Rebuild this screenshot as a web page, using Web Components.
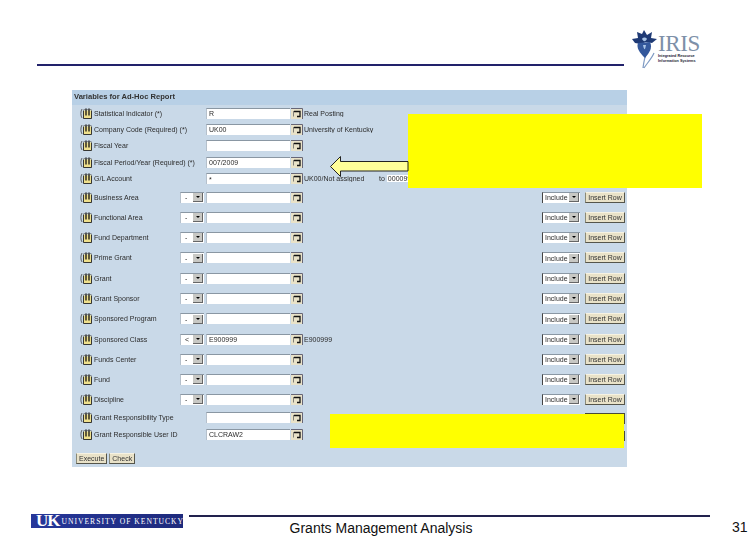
<!DOCTYPE html>
<html>
<head>
<meta charset="utf-8">
<title>Grants Management Analysis</title>
<style>
  html, body { margin: 0; background: #fff; }
  body { width: 756px; height: 540px; overflow: hidden; font-family: "Liberation Sans", Arial, sans-serif; }
</style>
</head>
<body>
<slide-page>
  <slide-header></slide-header>
  <report-panel title="Variables for Ad-Hoc Report">
    <report-row h="16" label="Statistical Indicator (*)" value="R" desc="Real Posting"></report-row>
    <report-row h="16" label="Company Code (Required) (*)" value="UK00" desc="University of Kentucky"></report-row>
    <report-row h="17" label="Fiscal Year"></report-row>
    <report-row h="16" label="Fiscal Period/Year (Required) (*)" value="007/2009"></report-row>
    <report-row h="17" label="G/L Account" value="*" desc="UK00/Not assigned" to="00009999"></report-row>
    <report-row h="20" label="Business Area" op="-" more></report-row>
    <report-row h="20" label="Functional Area" op="-" more></report-row>
    <report-row h="20" label="Fund Department" op="-" more></report-row>
    <report-row h="21" label="Prime Grant" op="-" more></report-row>
    <report-row h="20" label="Grant" op="-" more></report-row>
    <report-row h="20" label="Grant Sponsor" op="-" more></report-row>
    <report-row h="21" label="Sponsored Program" op="-" more></report-row>
    <report-row h="20" label="Sponsored Class" op="<" value="E900999" desc="E900999" more></report-row>
    <report-row h="20" label="Funds Center" op="-" more></report-row>
    <report-row h="20" label="Fund" op="-" more></report-row>
    <report-row h="20" label="Discipline" op="-" more></report-row>
    <report-row h="17" label="Grant Responsibility Type"></report-row>
    <report-row h="16" label="Grant Responsible User ID" value="CLCRAW2"></report-row>
    <sap-button slot="actions">Execute</sap-button>
    <sap-button slot="actions">Check</sap-button>
  </report-panel>
  <slide-footer page="31">Grants Management Analysis</slide-footer>
</slide-page>

<script>
class SlidePage extends HTMLElement {
  constructor () {
    super()
    this.shadow = this.attachShadow({ mode: 'open' })
  }

  connectedCallback () {
    this.shadow.innerHTML = /* html */`
      <style>
        :host { display: flex; flex-direction: column; position: relative; width: 756px; height: 540px; }
        /* the highlight boxes and the arrow are laid over the report */
        .cover { position: absolute; background: #ffff00; }
        .top { left: 408px; top: 114px; width: 294px; height: 74px; }
        .bottom { left: 330px; top: 414px; width: 294px; height: 34px; }
        .sliver {
          position: absolute; left: 585px; top: 413px; width: 40px; height: 28px;
          border-top: 1px solid #4a4a3a; box-sizing: border-box;
          background: linear-gradient(#4a4a3a 0 10px, transparent 10px 17px, #4a4a3a 17px) right / 1px 100% no-repeat;
        }
        svg { position: absolute; left: 328px; top: 154px; }
      </style>
      <slot></slot>
      <div class="sliver"></div>
      <div class="cover top"></div>
      <div class="cover bottom"></div>
      <svg width="82" height="25" viewBox="0 0 82 25">
        <path d="M2.5 12.5 L12.5 2.5 V7.5 H80 V17 H12.5 V22.5 Z" fill="#ffff99" stroke="#222" stroke-width="1"/>
      </svg>
    `
  }
}

class SlideHeader extends HTMLElement {
  constructor () {
    super()
    this.shadow = this.attachShadow({ mode: 'open' })
  }

  connectedCallback () {
    this.shadow.innerHTML = /* html */`
      <style>
        :host { display: flex; height: 90px; padding-left: 37px; box-sizing: border-box; }
        .rule { width: 587px; height: 2px; margin-top: 64px; background: #22226b; }
        .logo { display: flex; margin: 30px 0 0 8px; width: 70px; }
        svg { flex: none; }
        .words { display: flex; flex-direction: column; color: #000; }
        .name { font: 23px/20px "Liberation Serif", serif; letter-spacing: -.4px; color: #7d90a8; margin-top: 4px; }
        .sub { font: bold 3.8px/5px "Liberation Sans", sans-serif; white-space: nowrap; color: #223; }
      </style>
      <div class="rule"></div>
      <div class="logo">
        <svg width="26" height="40" viewBox="0 0 26 40">
          <path d="M11 38 C12 30 13 26 15 21 M12 38 C16 32 20 28 22 23" fill="none" stroke="#7f9bc4" stroke-width="1.2"/>
          <path d="M12 0 L15 5 L20 2 L19 8 L25 9 L20 13 L14 12 L9 14 L3 13 L0 9 L6 8 L5 2 L10 4 Z" fill="#1f3a75"/>
          <path d="M6 13 C4 18 8 23 13 28 C17 23 21 18 18 12 Z" fill="#34589c"/>
          <path d="M10 9 C12 12 13 12 15 9 C14 7 11 7 10 9 Z M11 15 C12 20 13 21 14 15 Z" fill="#a9c4e6"/>
        </svg>
        <div class="words">
          <span class="name">IRIS</span>
          <span class="sub">Integrated Resource<br>Information Systems</span>
        </div>
      </div>
    `
  }
}

class ReportPanel extends HTMLElement {
  constructor () {
    super()
    this.shadow = this.attachShadow({ mode: 'open' })
  }

  connectedCallback () {
    this.shadow.innerHTML = /* html */`
      <style>
        :host {
          display: block; width: 555px; height: 377px; margin-left: 72px;
          background: #c9d9e8; color: #2c2c2c;
          font: 7px "Liberation Sans", Arial, sans-serif; filter: blur(.35px);
        }
        .head {
          height: 15px; line-height: 13px; padding-left: 2px; box-sizing: border-box;
          background: #b8d0e6; font-weight: bold; font-size: 7.6px; color: #333;
        }
        .actions { display: flex; gap: 2px; margin-top: 11px; padding-left: 4px; }
      </style>
      <div class="head">${this.getAttribute('title')}</div>
      <slot></slot>
      <div class="actions"><slot name="actions"></slot></div>
    `
  }
}

class ReportRow extends HTMLElement {
  constructor () {
    super()
    this.shadow = this.attachShadow({ mode: 'open' })
  }

  connectedCallback () {
    const value = this.getAttribute('value') || ''
    const op = this.getAttribute('op')
    const desc = this.getAttribute('desc') || ''
    const to = this.getAttribute('to')

    this.shadow.innerHTML = /* html */`
      <style>
        :host {
          display: grid; align-items: center; box-sizing: border-box;
          grid-template-columns: 14px 86px 24px 2px 84px 13px 1fr 38px 5px 40px 2px;
          padding-left: 8px; height: ${this.getAttribute('h')}px; white-space: nowrap;
        }
        .icon { width: 13px; height: 11px; }
        .op, .input, .incl {
          display: flex; align-items: center; box-sizing: border-box; height: 11px;
          background: #fff; border-top: 1px solid #8a97a3; border-left: 1px solid #b5c0cb;
          overflow: hidden; padding-left: 2px;
        }
        .op { grid-column: 3; justify-content: space-between; padding-left: 4px; }
        .input { grid-column: 5; }
        .incl { grid-column: 8; justify-content: space-between; border-left-color: #444; }
        .arrow {
          flex: none; display: flex; align-items: center; justify-content: center;
          width: 10px; height: 9px; margin-right: 1px; background: #c8c8c4;
          border-right: 1px solid #666; border-bottom: 1px solid #666; box-sizing: border-box;
        }
        .arrow::after { content: ""; border: 2.5px solid transparent; border-top-color: #000; border-bottom: 0; }
        .pick { grid-column: 6; margin-left: 1px; width: 12px; height: 11px; }
        .desc { grid-column: 7; display: flex; padding-left: 1px; overflow: hidden; }
        .desc b { font-weight: normal; min-width: 61px; }
        .to { margin-left: 14px; }
        .to span { background: #fff; margin-left: 2px; padding-left: 1px; }
        sap-button { grid-column: 10; }
      </style>
      <svg class="icon" viewBox="0 0 13 11">
        <path d="M2 1 C0.5 3 0.5 8 2 10" fill="none" stroke="#444" stroke-width=".8"/>
        <path d="M3.5 2.5 H11.5 V10.5 H3.5 Z" fill="#efe08c"/>
        <path d="M3.5 2.5 V10.5 H11.5 V2.5" fill="none" stroke="#222" stroke-width=".9"/>
        <path d="M6 .5 V7.5 M9 .5 V7.5" stroke="#111" stroke-width="1.3"/>
        <path d="M3.5 1.5 H11.5" stroke="#555" stroke-width=".6"/>
      </svg>
      <span class="label">${this.getAttribute('label')}</span>
      ${op ? `<div class="op"><span>${op === '<' ? '&lt;' : op}</span><i class="arrow"></i></div>` : ''}
      <div class="input">${value}</div>
      <svg class="pick" viewBox="0 0 12 11">
        <rect width="12" height="11" fill="#e9e2c8"/>
        <path d="M0 .5 H11.5 V11" fill="none" stroke="#667" stroke-width="1"/>
        <path d="M3 3.5 H9 V8.5 H6" fill="none" stroke="#111" stroke-width="1.3"/>
        <path d="M2.5 3 V8.5" stroke="#555" stroke-width=".7"/>
      </svg>
      <div class="desc"><b>${desc}</b>${to ? `<div class="to">to<span>${to}</span></div>` : ''}</div>
      ${this.hasAttribute('more') ? `
        <div class="incl"><span>Include</span><i class="arrow"></i></div>
        <sap-button>Insert Row</sap-button>
      ` : ''}
    `
  }
}

class SapButton extends HTMLElement {
  constructor () {
    super()
    this.shadow = this.attachShadow({ mode: 'open' })
  }

  connectedCallback () {
    this.shadow.innerHTML = /* html */`
      <style>
        :host {
          display: block; box-sizing: border-box; height: 11px; line-height: 9px; padding: 0 2px;
          text-align: center; white-space: nowrap; color: #333; font-size: 7px;
          background: #e9e2c8; border: 1px solid #f6f2e2; border-left-color: #8a8a78;
          border-right-color: #55554a; border-bottom-color: #55554a;
        }
      </style>
      <slot></slot>
    `
  }
}

class SlideFooter extends HTMLElement {
  constructor () {
    super()
    this.shadow = this.attachShadow({ mode: 'open' })
  }

  connectedCallback () {
    this.shadow.innerHTML = /* html */`
      <style>
        :host {
          display: flex; margin-top: 47px; padding-left: 31px;
          font: 14px "Liberation Sans", Arial, sans-serif; color: #111;
        }
        .uk {
          display: flex; align-items: center; flex: none; width: 152px; height: 14px; box-sizing: border-box;
          white-space: nowrap; color: #fff;
          background: linear-gradient(90deg, #26379a, #1e2a7c); font-family: "Liberation Serif", serif;
        }
        .uk b { font-size: 17px; line-height: 14px; letter-spacing: -1px; margin-left: 5px; }
        .uk span { font-size: 7.6px; letter-spacing: 1px; margin-left: 2px; }
        .mid { flex: none; width: 521px; margin-left: 6px; }
        .rule { height: 2px; margin-top: 1px; background: #22224e; }
        .title { text-align: center; margin: 3px 137px 0 0; line-height: 17px; }
        .page { margin: 5px 0 0 22px; line-height: 17px; }
      </style>
      <div class="uk"><b>UK</b><span>UNIVERSITY OF KENTUCKY</span></div>
      <div class="mid">
        <div class="rule"></div>
        <div class="title"><slot></slot></div>
      </div>
      <div class="page">${this.getAttribute('page')}</div>
    `
  }
}

customElements.define('sap-button', SapButton)
customElements.define('report-row', ReportRow)
customElements.define('report-panel', ReportPanel)
customElements.define('slide-header', SlideHeader)
customElements.define('slide-footer', SlideFooter)
customElements.define('slide-page', SlidePage)
</script>
</body>
</html>
